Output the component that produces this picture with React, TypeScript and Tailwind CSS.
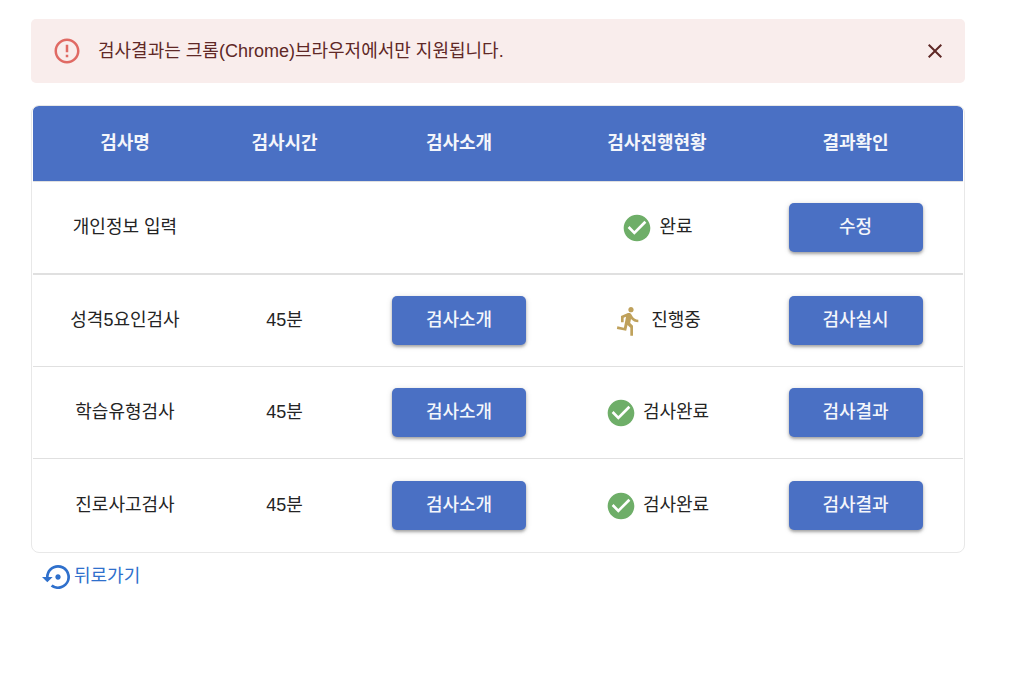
import { useState } from "react";
import {
  MdCheckCircle,
  MdClose,
  MdDirectionsRun,
  MdErrorOutline,
  MdSettingsBackupRestore,
} from "react-icons/md";

type Status = "done" | "running";

interface Exam {
  name: string;
  time?: string;
  intro?: boolean;
  status: Status;
  statusLabel: string;
  action: string;
}

const exams: Exam[] = [
  { name: "개인정보 입력", status: "done", statusLabel: "완료", action: "수정" },
  { name: "성격5요인검사", time: "45분", intro: true, status: "running", statusLabel: "진행중", action: "검사실시" },
  { name: "학습유형검사", time: "45분", intro: true, status: "done", statusLabel: "검사완료", action: "검사결과" },
  { name: "진로사고검사", time: "45분", intro: true, status: "done", statusLabel: "검사완료", action: "검사결과" },
];

const headers = ["검사명", "검사시간", "검사소개", "검사진행현황", "결과확인"];

function ActionButton({ children }: { children: string }) {
  return (
    <button
      type="button"
      className="mx-auto block h-[49px] w-[134px] rounded-[5px] bg-[#4a70c4] pb-0.5 font-medium text-[#f4f6fb] shadow-[0_2px_3px_rgba(0,0,0,0.3),0_1px_6px_rgba(0,0,0,0.12)]"
    >
      {children}
    </button>
  );
}

function StatusCell({ status, label }: { status: Status; label: string }) {
  return (
    <div className="flex items-center justify-center gap-1.5">
      {status === "done" ? (
        <MdCheckCircle className="size-8 text-[#6eae68]" />
      ) : (
        <MdDirectionsRun className="size-8 text-[#bfa15b]" />
      )}
      <span className="pb-0.5">{label}</span>
    </div>
  );
}

export default function App() {
  const [alertOpen, setAlertOpen] = useState(true);

  return (
    <main className="pt-[19px] pr-[51px] pb-8 pl-[31px] font-['Liberation_Sans','Noto_Sans_CJK_KR',sans-serif] text-[18px] leading-6 text-[#242424]">
      {alertOpen && (
        <div role="alert" className="mb-[22px] flex h-16 items-center rounded-[5px] bg-[#f9edec] pr-3.5 pl-[21px] text-[#5f2826]">
          <MdErrorOutline className="size-[30px] text-[#e06a64]" />
          <p className="ml-4 flex-1">검사결과는 크롬(Chrome)브라우저에서만 지원됩니다.</p>
          <button type="button" aria-label="닫기" onClick={() => setAlertOpen(false)} className="p-1">
            <MdClose className="size-6" />
          </button>
        </div>
      )}

      <div className="overflow-hidden rounded-lg border border-[#e8e8e8] px-px">
        <table className="w-full table-fixed border-separate border-spacing-0 overflow-hidden rounded-t-[5px] text-center">
          <colgroup>
            <col className="w-[184px]" />
            <col className="w-[135px]" />
            <col className="w-[214px]" />
            <col className="w-[182px]" />
            <col className="w-[215px]" />
          </colgroup>
          <thead>
            <tr className="h-[76px] bg-[#4a70c4] text-[#f4f6fb]">
              {headers.map((h) => (
                <th key={h} scope="col" className="border-b border-[#e0e0e0] pb-0.5 font-bold">
                  {h}
                </th>
              ))}
            </tr>
          </thead>
          <tbody>
            {exams.map((exam) => (
              <tr
                key={exam.name}
                className="h-[92px] first:h-[93px] last:h-[93px] *:border-b *:border-[#e0e0e0] first:*:border-b-2 last:*:border-b-0"
              >
                <td className="pb-0.5">{exam.name}</td>
                <td className="pb-0.5">{exam.time}</td>
                <td>{exam.intro && <ActionButton>검사소개</ActionButton>}</td>
                <td>
                  <StatusCell status={exam.status} label={exam.statusLabel} />
                </td>
                <td>
                  <ActionButton>{exam.action}</ActionButton>
                </td>
              </tr>
            ))}
          </tbody>
        </table>
      </div>

      <a href="#back" className="mt-2 ml-[11px] inline-flex items-center text-[#2f70cc]">
        <MdSettingsBackupRestore className="size-8" />
        <span className="pb-0.5">뒤로가기</span>
      </a>
    </main>
  );
}
